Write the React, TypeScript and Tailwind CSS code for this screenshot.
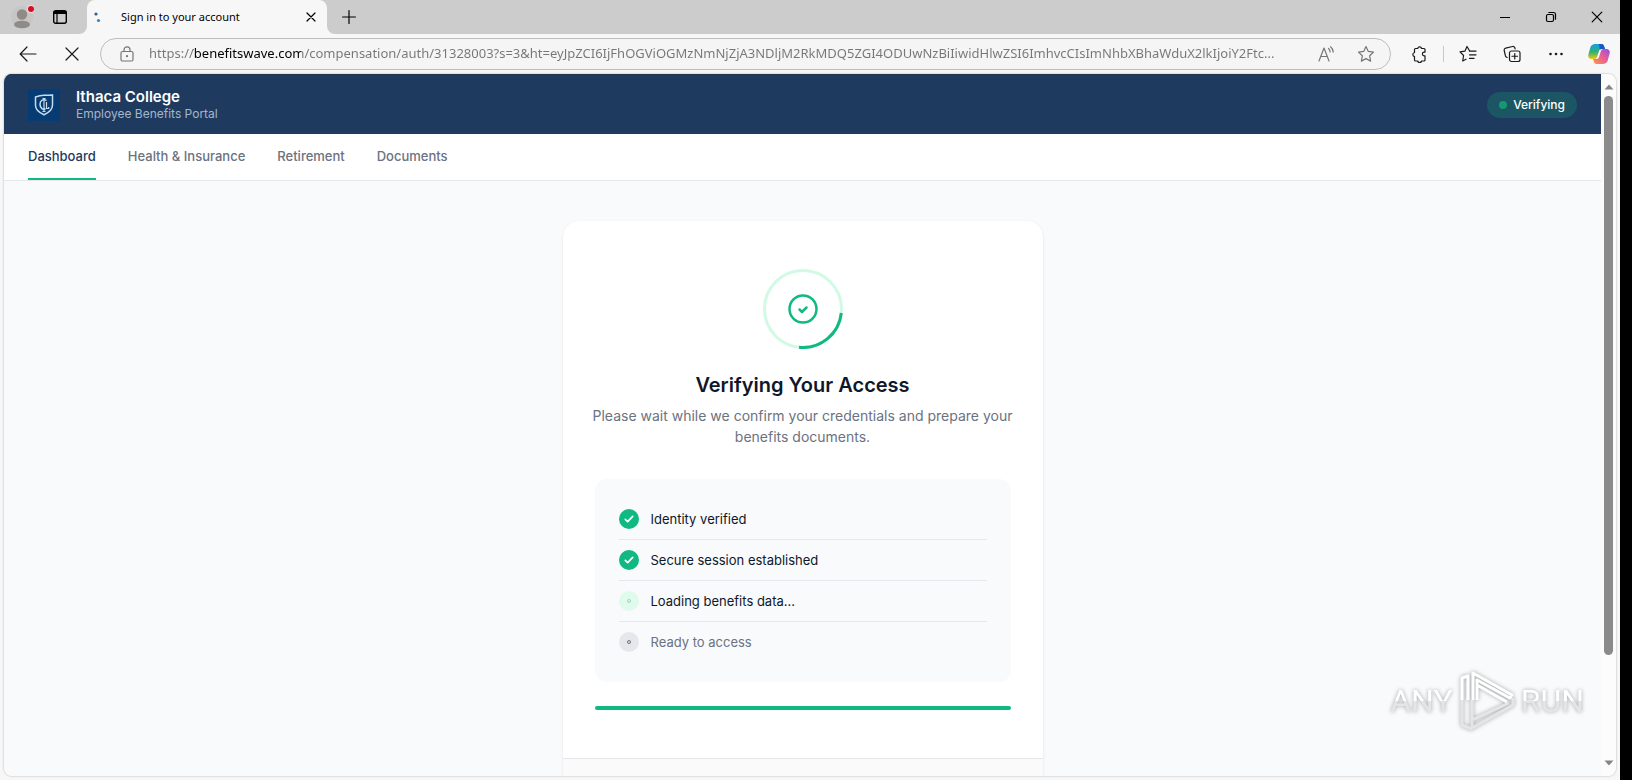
import type { ReactNode } from "react";

const ADDRESS =
  "https://benefitswave.com/compensation/auth/31328003?s=3&ht=eyJpZCI6IjFhOGViOGMzNmNjZjA3NDljM2RkMDQ5ZGI4ODUwNzBiIiwidHlwZSI6ImhvcCIsImNhbXBhaWduX2lkIjoiY2Ftc...";

const NAV_ITEMS = ["Dashboard", "Health & Insurance", "Retirement", "Documents"];

type StepState = "done" | "active" | "pending";

const STEPS: { label: string; state: StepState }[] = [
  { label: "Identity verified", state: "done" },
  { label: "Secure session established", state: "done" },
  { label: "Loading benefits data...", state: "active" },
  { label: "Ready to access", state: "pending" },
];

function IconButton({
  label,
  className = "w-11",
  children,
}: {
  label: string;
  className?: string;
  children: ReactNode;
}) {
  return (
    <button
      type="button"
      aria-label={label}
      className={`flex h-8 shrink-0 items-center justify-center ${className}`}
    >
      {children}
    </button>
  );
}

function Line({ size = 20, children }: { size?: number; children: ReactNode }) {
  return (
    <svg
      width={size}
      height={size}
      viewBox={`0 0 ${size} ${size}`}
      fill="none"
      stroke="currentColor"
      strokeWidth="1.2"
      strokeLinecap="round"
      strokeLinejoin="round"
      aria-hidden="true"
    >
      {children}
    </svg>
  );
}

function TabStrip() {
  return (
    <div className="flex h-[34px] shrink-0">
      <div className="flex w-[87px] shrink-0 items-center rounded-br-lg bg-[#cccccc] pl-1">
        <IconButton label="Profile" className="w-9">
          <svg width="24" height="24" viewBox="0 0 24 24" aria-hidden="true">
            <circle cx="12" cy="12" r="11" fill="#c8c6c4" />
            <circle cx="12" cy="9.5" r="5.2" fill="#8f8b88" />
            <ellipse cx="12" cy="19.5" rx="8" ry="3.8" fill="#8f8b88" />
            <circle cx="21" cy="4" r="4" fill="#f4d9dc" />
            <circle cx="21" cy="4" r="3" fill="#d50f25" />
          </svg>
        </IconButton>
        <IconButton label="Tab actions" className="w-10 text-black">
          <svg width="16" height="16" viewBox="0 0 16 16" fill="none" stroke="currentColor" aria-hidden="true">
            <rect x="1.7" y="1.7" width="12.6" height="12.6" rx="2" strokeWidth="1.4" />
            <path d="M1.7 3.5h12.6" strokeWidth="3" />
            <path d="M5 4v10" strokeWidth="1.2" />
          </svg>
        </IconButton>
      </div>
      <div className="w-60 shrink-0 bg-[#cccccc]">
        <div className="flex h-full items-center rounded-t-lg bg-[#f7f7f7] pl-[6px] text-black">
          <svg width="8" height="12" viewBox="0 0 8 12" aria-hidden="true">
            <circle cx="3" cy="3" r="1.6" fill="#2b5f93" />
            <circle cx="5.5" cy="9.5" r="1.6" fill="#2f86c9" />
          </svg>
          <span className="ml-5 flex-1 font-['Noto_Sans',sans-serif] text-[11px]">Sign in to your account</span>
          <IconButton label="Close tab" className="w-8">
            <Line size={10}>
              <path d="M1 1l8 8M9 1l-8 8" />
            </Line>
          </IconButton>
        </div>
      </div>
      <div className="flex flex-1 items-center justify-between rounded-bl-lg bg-[#cccccc] text-black">
        <IconButton label="New tab">
          <Line size={14}>
            <path d="M7 .6v12.8M.6 7h12.8" />
          </Line>
        </IconButton>
        <div className="flex">
          <IconButton label="Minimize" className="w-[46px]">
            <Line size={10}>
              <path d="M.5 5.5h9" />
            </Line>
          </IconButton>
          <IconButton label="Restore" className="w-[46px]">
            <Line size={12}>
              <rect x="1.5" y="3.5" width="7" height="7" rx="1.5" />
              <path d="M3.8 1.5h4.7a2 2 0 0 1 2 2v4.7" />
            </Line>
          </IconButton>
          <IconButton label="Close" className="w-[46px]">
            <Line size={12}>
              <path d="M1.2 1.2l9.6 9.6M10.8 1.2l-9.6 9.6" />
            </Line>
          </IconButton>
        </div>
      </div>
    </div>
  );
}

function CopilotLogo() {
  return (
    <svg width="22" height="20" viewBox="0 0 22 20" aria-hidden="true">
      <defs>
        <linearGradient id="copilot-left" x1="0" y1="0" x2="0" y2="1">
          <stop offset="0" stopColor="#159be8" />
          <stop offset=".55" stopColor="#35b36b" />
          <stop offset="1" stopColor="#f3c615" />
        </linearGradient>
        <linearGradient id="copilot-right" x1="1" y1="0" x2="0" y2="1">
          <stop offset="0" stopColor="#9a4de0" />
          <stop offset=".5" stopColor="#ec5f93" />
          <stop offset="1" stopColor="#fb9a3c" />
        </linearGradient>
      </defs>
      <path d="M7.5 0h6c1.6 0 2.2 1 2.7 2.5L17 5h-3.5c-1.6 0-2.3 1-2.7 2.4L9.4 12c-.5 1.9-1.3 3-3 3H3.5C.8 15-.2 13 .4 10.5l1.8-6.7C3 1.2 4.7 0 7.5 0z" fill="url(#copilot-left)" />
      <path d="M14.5 20h-6c-1.6 0-2.2-1-2.7-2.5L5 15h3.500c1.600 0 2.300-1 2.700-2.400L12.600 8c.5-1.900 1.300-3 3-3h2.900c2.700 0 3.700 2 3.100 4.500l-1.800 6.700C19 18.800 17.300 20 14.500 20z" fill="url(#copilot-right)" />
      <path d="M11 0h2.500c1.600 0 2.200 1 2.700 2.500L17 5h-3.500c-.8 0-1.300.2-1.700.6z" fill="#1c55c9" />
    </svg>
  );
}

function Toolbar() {
  return (
    <div className="flex h-10 shrink-0 items-center pl-[6px] text-[#1b1b1b]">
      <IconButton label="Back">
        <Line size={18}>
          <path d="M17 9H1.5M8 2L1.2 9L8 16" />
        </Line>
      </IconButton>
      <IconButton label="Stop loading">
        <Line size={14}>
          <path d="M1 1l12 12M13 1l-12 12" />
        </Line>
      </IconButton>
      <div className="ml-[6px] flex h-8 min-w-0 flex-1 items-center rounded-full border border-[#bdbdbd] bg-[#f5f5f5] text-[#767676]">
        <IconButton label="Site information" className="ml-1 w-11">
          <Line size={16}>
            <rect x="2" y="5.5" width="12" height="9.5" rx="1.5" />
            <path d="M5 5.5V3.8a3 3 0 0 1 6 0v1.7" />
            <circle cx="8" cy="10.2" r=".5" fill="currentColor" />
          </Line>
        </IconButton>
        {/* hard gradient stops darken only the domain part of the address */}
        <input
          type="text"
          aria-label="Address"
          readOnly
          value={ADDRESS}
          className="min-w-0 flex-1 bg-[linear-gradient(90deg,#767676_44px,#000_44px,#000_152px,#767676_152px)] bg-clip-text font-['Noto_Sans',sans-serif] text-[13px] text-transparent outline-none"
        />
        <IconButton label="Read aloud" className="w-10">
          <Line size={18}>
            <path d="M2 16L7 3l5 13M3.8 11.5h6.4" />
            <path d="M11.5 3.5c1 .8 1.6 2 1.6 3.4M13.5 1.8c1.700 1.300 2.700 3.200 2.700 5.300" />
          </Line>
        </IconButton>
        <IconButton label="Add to favorites" className="mr-1 w-10">
          <Line size={18}>
            <path d="M9 1.5l2.300 4.900 5.200.7-3.800 3.700.9 5.300L9 13.600l-4.600 2.500.9-5.300L1.500 7.100l5.200-.7z" />
          </Line>
        </IconButton>
      </div>
      <IconButton label="Extensions" className="ml-[6px] w-11">
        <Line size={18}>
          <path d="M5.500 3.500h2.200a2 2 0 0 1 3.900 0H14a1 1 0 0 1 1 1v2.700h-.8a1.800 1.800 0 0 0 0 3.600h.8V15a1 1 0 0 1-1 1h-2.400a2 2 0 0 1-3.900 0H5.500a1 1 0 0 1-1-1v-3.400a2.100 2.100 0 0 1 0-4.100v-3a1 1 0 0 1 1-1z" />
        </Line>
      </IconButton>
      <div className="mx-[2px] h-4 w-px bg-[#c8c8c8]" />
      <IconButton label="Favorites">
        <Line size={18}>
          <path d="M10.500 5.800L8 1.500L5.900 6.200l-4.900.7l3.600 3.600l-.9 5.500L7 14.200M10.500 6.200h6.500M10.500 9.800h6.500M10.500 13.400h4.500" />
        </Line>
      </IconButton>
      <IconButton label="Collections">
        <Line size={18}>
          <rect x="6.500" y="6" width="10.500" height="10.500" rx="2" />
          <path d="M11.750 8.500v5.500M9 11.250h5.500M4.200 12.500A2.500 2.500 0 0 1 2.500 11L1.200 5.500a2 2 0 0 1 1.500-2.400L9.500 1.500a2 2 0 0 1 2.400 1.500l.2.800" />
        </Line>
      </IconButton>
      <IconButton label="Settings and more">
        <svg width="16" height="4" viewBox="0 0 16 4" fill="currentColor" aria-hidden="true">
          <circle cx="2.5" cy="2" r="1.3" />
          <circle cx="8" cy="2" r="1.3" />
          <circle cx="13.5" cy="2" r="1.3" />
        </svg>
      </IconButton>
      <IconButton label="Copilot" className="w-[42px]">
        <CopilotLogo />
      </IconButton>
    </div>
  );
}

function CollegeLogo() {
  return (
    <span className="flex size-8 items-center justify-center bg-[#063b73] text-[#c5dced]">
      <svg width="20" height="22" viewBox="0 0 20 22" fill="none" stroke="currentColor" aria-hidden="true">
        <path d="M1.5 3Q6 1.3 10 1.3T18.5 1v10c0 5-3.5 7.5-8.5 9.8C5 18.5 1.5 16 1.5 11.5z" strokeWidth="1.5" />
        <path d="M12.5 6.5C9.5 4.5 6 6.5 6 10.3s2.8 5.7 5.5 4.400" strokeWidth="1.5" />
        <path d="M10 4.500v13M8.500 4.500h3M8.500 17.500h3M12.500 8v6.500h2.200v-1.500" strokeWidth="1.2" />
      </svg>
    </span>
  );
}

function PortalHeader() {
  return (
    <header className="flex h-[60px] shrink-0 items-center justify-between border-t-2 border-[#27384e] bg-[#1e3a5f] px-6 text-white">
      <div className="flex items-center gap-4">
        <CollegeLogo />
        <div>
          <p className="text-[15px] leading-[18px] font-semibold">Ithaca College</p>
          <p className="text-xs leading-4 text-[#a5b6cb]">Employee Benefits Portal</p>
        </div>
      </div>
      <p className="flex items-center gap-[6px] rounded-full bg-[#1c5563] px-3 py-1 text-xs leading-[18px] font-medium">
        <span className="size-2 rounded-full bg-[#15996f]" />
        Verifying
      </p>
    </header>
  );
}

function PortalNav() {
  return (
    <nav className="flex h-[47px] shrink-0 gap-8 border-b border-[#e5e7eb] bg-white px-6 text-[13px] font-medium">
      {NAV_ITEMS.map((item, index) => (
        <a
          key={item}
          href="#"
          aria-current={index === 0 ? "page" : undefined}
          className={`flex items-center border-y-2 border-t-transparent ${
            index === 0 ? "border-b-[#10b981] text-[#1e3a5f]" : "border-b-transparent text-[#6b7280]"
          }`}
        >
          {item}
        </a>
      ))}
    </nav>
  );
}

function StepIcon({ state }: { state: StepState }) {
  if (state === "done") {
    return (
      <span className="flex size-5 items-center justify-center rounded-full bg-[#10b981] text-white">
        <svg width="10" height="10" viewBox="0 0 10 10" fill="none" stroke="currentColor" strokeWidth="1.7" strokeLinecap="round" strokeLinejoin="round" aria-hidden="true">
          <path d="M1.3 5.3l2.4 2.3L8.7 2.3" />
        </svg>
      </span>
    );
  }
  return (
    <span
      className={`flex size-5 items-center justify-center rounded-full ${
        state === "active" ? "bg-[#e0faec] text-[#9dd8bd]" : "bg-[#e5e7eb] text-[#6b7280]"
      }`}
    >
      <svg width="6" height="6" viewBox="0 0 6 6" fill="none" stroke="currentColor" aria-hidden="true">
        <circle cx="3" cy="3" r="1.5" />
      </svg>
    </span>
  );
}

function VerifyCard() {
  return (
    <section className="w-full max-w-[480px] overflow-hidden rounded-2xl bg-white shadow-[0_1px_3px_rgba(0,0,0,0.1)]">
      <div className="px-8 py-12">
        <svg className="mx-auto" width="80" height="80" viewBox="0 0 80 80" fill="none" aria-hidden="true">
          <circle cx="40" cy="40" r="38.5" stroke="#d1fae5" strokeWidth="3" />
          <path d="M78.3 44A38.5 38.5 0 0 1 36 78.3" stroke="#10b981" strokeWidth="3" />
          <circle cx="40" cy="40" r="13.5" stroke="#10b981" strokeWidth="2.5" />
          <path d="M36.5 40.5l2.5 2.5l4.5-4.5" stroke="#10b981" strokeWidth="2.5" strokeLinecap="round" strokeLinejoin="round" />
        </svg>
        <h1 className="mt-6 text-center text-xl leading-6 font-semibold text-[#0f172a]">Verifying Your Access</h1>
        <p className="-mx-2 mt-2 text-center text-sm leading-[21px] text-[#6b7280]">
          Please wait while we confirm your credentials and prepare your benefits documents.
        </p>
        <ul className="mt-8 divide-y divide-[#e5e7eb] rounded-xl bg-[#f8fafc] px-6 py-5 text-[13px] leading-5">
          {STEPS.map((step) => (
            <li
              key={step.label}
              className={`flex items-center gap-3 py-[10px] ${
                step.state === "pending" ? "text-[#6b7280]" : "text-[#0f172a]"
              }`}
            >
              <StepIcon state={step.state} />
              {step.label}
            </li>
          ))}
        </ul>
        <div className="mt-6 h-1 rounded-full bg-[#10b981]" role="progressbar" aria-label="Verification progress" aria-valuenow={100} />
      </div>
      <div className="h-16 border-t border-[#e5e7eb] bg-[#fafafa]" />
    </section>
  );
}

function Scrollbar() {
  return (
    <div className="flex w-[15px] shrink-0 flex-col items-center bg-[#fcfcfc] py-2 text-[#858585]">
      <svg width="10" height="10" viewBox="0 0 10 10" fill="currentColor" aria-hidden="true">
        <path d="M5 2.5L9.5 7.5H.5z" />
      </svg>
      <div className="my-1 w-full flex-1">
        <div className="mx-auto h-[85%] w-[9px] rounded-full bg-[#8b8b8b]" />
      </div>
      <svg width="10" height="10" viewBox="0 0 10 10" fill="currentColor" aria-hidden="true">
        <path d="M5 7.5L.5 2.5h9z" />
      </svg>
    </div>
  );
}

function Watermark() {
  return (
    <div className="pointer-events-none absolute right-9 bottom-12 flex items-center gap-[6px] font-['Roboto',sans-serif] text-[32px] leading-10 text-white drop-shadow-[0_0_2px_rgba(0,0,0,0.35)]">
      <span className="bg-linear-to-b from-white from-50% to-[#e3e5e7] to-50% bg-clip-text text-transparent">ANY</span>
      <svg width="56" height="62" viewBox="0 0 56 62" fill="none" strokeWidth="3" strokeLinejoin="round" aria-hidden="true">
        <path d="M13 30v20l37-17M13 42v16L54 35v-7M3 30v25l10 4" stroke="#e3e5e7" />
        <path d="M3 30V8l6-2v24M14 30V3l39 22l-2 3L18 10v20M18 15l30 17" stroke="currentColor" />
      </svg>
      <span className="bg-linear-to-b from-white from-50% to-[#e3e5e7] to-50% bg-clip-text text-transparent">RUN</span>
    </div>
  );
}

export default function App() {
  return (
    <div className="h-screen bg-black pr-3">
      <div className="relative flex h-full flex-col bg-[#f7f7f7]">
        <TabStrip />
        <Toolbar />
        <div className="mx-1 mb-1 flex min-h-0 flex-1 overflow-hidden rounded-lg font-['Inter',sans-serif] shadow-[0_0_2px_rgba(0,0,0,0.35)]">
          <div className="flex min-w-0 flex-1 flex-col overflow-hidden bg-[#f8fafc]">
            <PortalHeader />
            <PortalNav />
            <main className="flex min-h-0 flex-1 items-start justify-center px-6 pt-10">
              <VerifyCard />
            </main>
          </div>
          <Scrollbar />
        </div>
        <Watermark />
      </div>
    </div>
  );
}
